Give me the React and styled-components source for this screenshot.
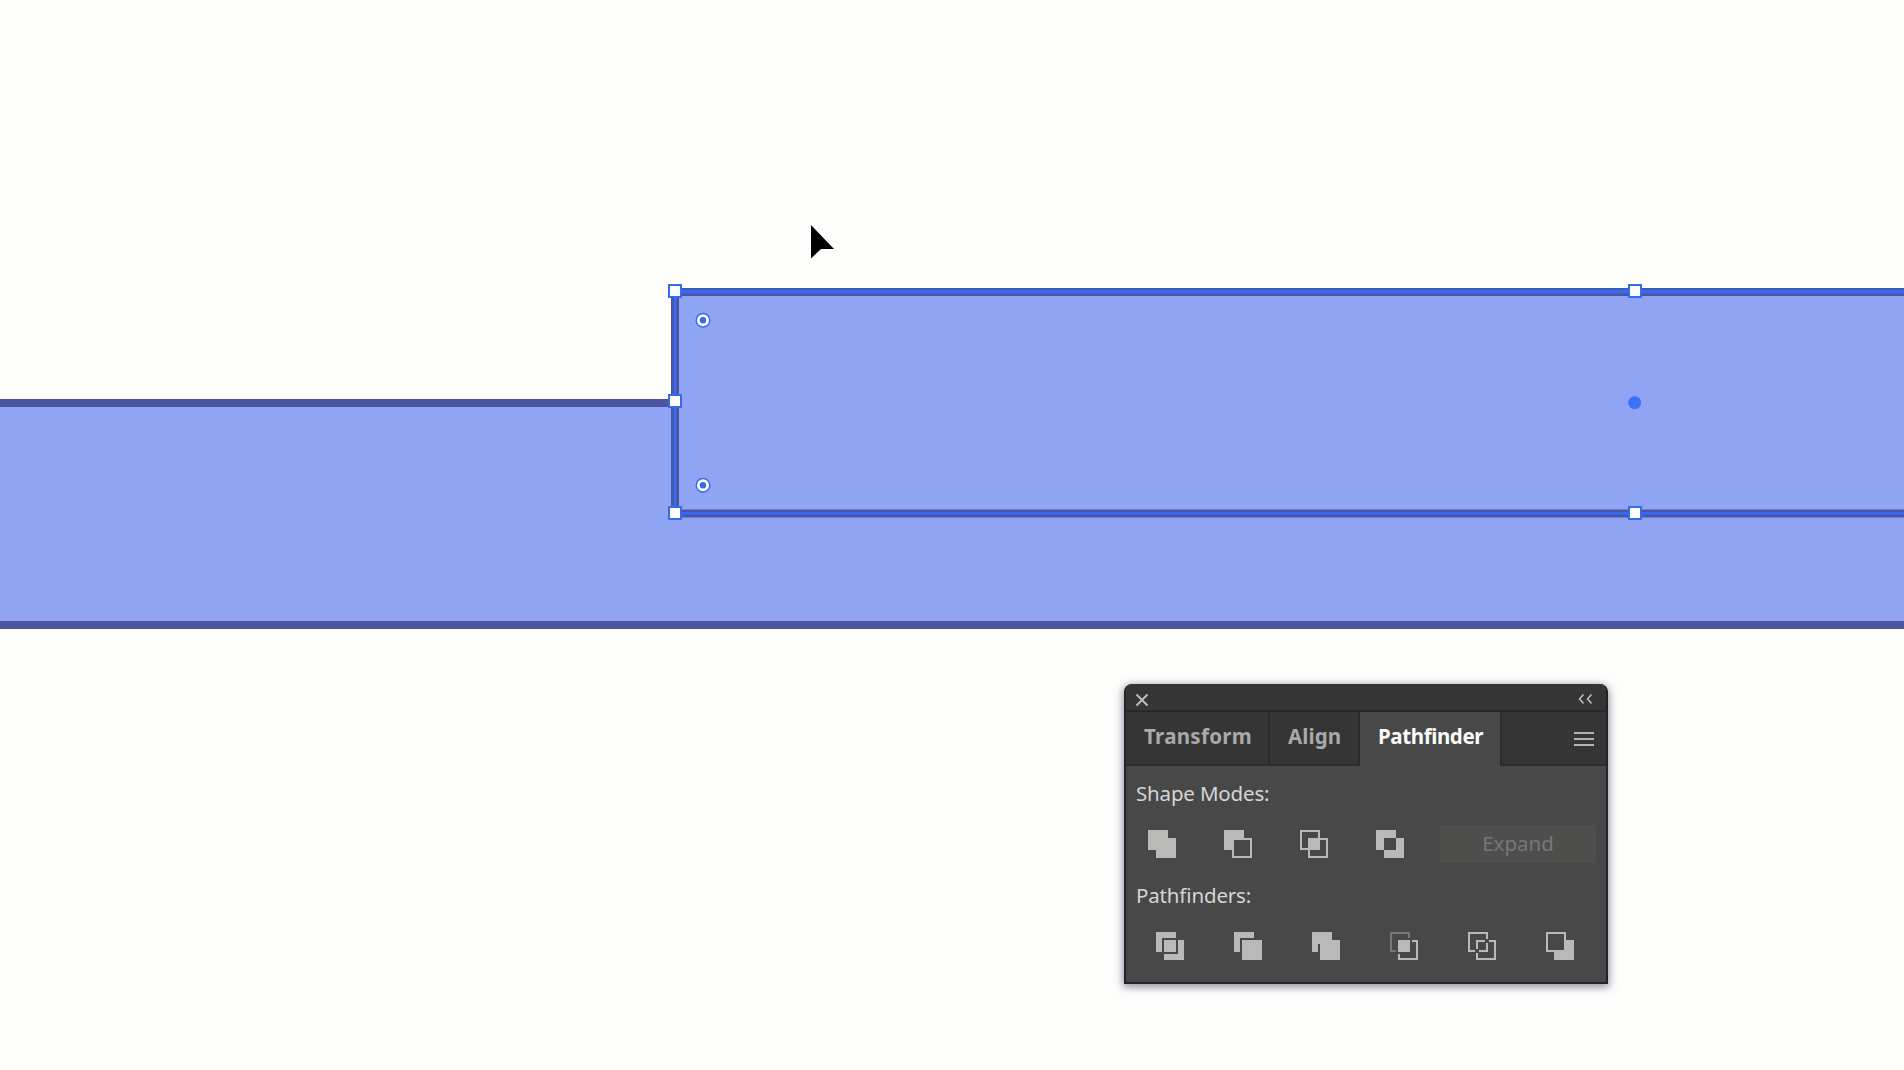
import React from "react";
import styled, { createGlobalStyle } from "styled-components";

const GlobalStyle = createGlobalStyle`
  html, body { margin: 0; padding: 0; background: #fdfefc; overflow: hidden; }
  * { box-sizing: border-box; }
`;

const Artboard = styled.main`
  position: relative;
  width: 1904px;
  height: 1070px;
  overflow: hidden;
  background: #fdfefc;
  font-family: "Noto Sans", "Open Sans", sans-serif;
`;

const Drawing = styled.svg`
  position: absolute;
  inset: 0;
  display: block;
`;

const Panel = styled.section`
  position: absolute;
  left: 1124px;
  top: 684px;
  width: 484px;
  height: 300px;
  display: flex;
  flex-direction: column;
  border: 2px solid #232329;
  border-top: 0;
  border-radius: 8px 8px 0 0;
  background: #484848;
  box-shadow: 0 2px 8px 1px rgba(30, 30, 60, 0.5);
  overflow: hidden;
`;

const TitleBar = styled.header`
  display: flex;
  align-items: center;
  justify-content: space-between;
  height: 28px;
  flex: none;
  padding: 5px 13px 0 9px;
  background: #353535;
  border-bottom: 2px solid #292929;
`;

const TabStrip = styled.nav`
  display: flex;
  height: 54px;
  flex: none;
  background: #353535;
`;

const Tab = styled.div`
  display: flex;
  align-items: center;
  width: ${(p) => p.$width}px;
  padding: 0 0 ${(p) => (p.$active ? 7 : 5)}px ${(p) => p.$inset}px;
  font-size: 20.5px;
  font-weight: 700;
  letter-spacing: ${(p) => p.$tracking}px;
  line-height: 28px;
  white-space: nowrap;
  color: ${(p) => (p.$active ? "#fafafa" : "#a9a9a9")};
  background: ${(p) => (p.$active ? "#484848" : "#353535")};
  border-right: 2px solid #2a2a2a;
  border-bottom: ${(p) => (p.$active ? "0" : "2px solid #2d2d2d")};
`;

const TabFill = styled.div`
  display: flex;
  flex: 1;
  align-items: center;
  justify-content: flex-end;
  padding: 2px 12px 0 0;
  border-bottom: 2px solid #2d2d2d;
`;

const Body = styled.div`
  display: flex;
  flex-direction: column;
`;

const Label = styled.div`
  height: 28px;
  margin-top: ${(p) => p.$top}px;
  padding-left: 10px;
  font-size: 20.5px;
  line-height: 28px;
  letter-spacing: ${(p) => p.$tracking}px;
  color: #d6d6d6;
`;

const IconRow = styled.div`
  display: flex;
  align-items: center;
  height: 38px;
  margin-top: ${(p) => p.$top}px;
  padding-left: ${(p) => p.$inset}px;
  gap: ${(p) => p.$gap}px;
`;

const Glyph = styled.svg`
  display: block;
  flex: none;
`;

const ExpandButton = styled.div`
  display: flex;
  align-items: center;
  justify-content: center;
  width: 156px;
  height: 38px;
  margin-left: -12px;
  padding-bottom: 2px;
  font-size: 20.5px;
  letter-spacing: 0;
  color: #777777;
  background: #4e4e4d;
`;

const INK = "#b9b9b7";

function ShapeIcon({ children }) {
  return (
    <Glyph width="28" height="28" viewBox="0 0 28 28" fill={INK} shapeRendering="crispEdges">
      {children}
    </Glyph>
  );
}

const Frame = ({ x, y }) => (
  <rect x={x + 1} y={y + 1} width="18" height="18" fill="none" stroke={INK} strokeWidth="2" />
);

const shapeModes = [
  <path d="M0 0h20v8h8v20H8v-8H0z" />,
  <>
    <path d="M0 0h20v8H8v12H0z" />
    <Frame x={8} y={8} />
  </>,
  <>
    <Frame x={0} y={0} />
    <Frame x={8} y={8} />
    <path d="M8 8h12v12H8z" />
  </>,
  <path fillRule="evenodd" d="M0 0h20v8h8v20H8v-8H0zM8 8v12h12V8z" />,
];

const pathfinders = [
  <path d="M0 0h20v6H6v14H0zM8 8h12v12H8zM22 8h6v20H8v-6h14z" />,
  <path d="M0 0h20v6H6v14H0zM8 8h20v20H8z" />,
  <path d="M0 0h20v8h8v20H8V12H6v8H0z" />,
  <>
    <path fill="#77777b" d="M0 0h20v6h-2V2H2v16h4v2H0z" />
    <path d="M8 8h12v12H8zM22 8h6v20H8v-6h2v4h16V10h-4z" />
  </>,
  <>
    <path d="M0 0h20v7h-2V2H2v16h5v2H0zM8 8h9v2h-7v7H8zM20 11v9h-9v-2h7v-7zM21 8h7v20H8v-7h2v5h16V10h-5z" />
  </>,
  <>
    <Frame x={0} y={0} />
    <path d="M20 8h8v20H8v-8h12z" />
  </>,
];

const STROKE = "#4b559f";
const SELECT = "#356bf2";

const Handle = ({ x, y }) => (
  <rect x={x + 1} y={y + 1} width="12" height="12" fill="#ffffff" stroke={SELECT} strokeWidth="2" />
);

const CornerWidget = ({ y }) => (
  <g>
    <circle cx="703" cy={y} r="7.5" fill={SELECT} />
    <circle cx="703" cy={y} r="6" fill="#ffffff" />
    <circle cx="703" cy={y} r="3.2" fill={SELECT} />
  </g>
);

export default function App() {
  return (
    <>
      <GlobalStyle />
      <Artboard>
        <Drawing width="1904" height="1070" viewBox="0 0 1904 1070">
          <rect x="-20" y="403" width="1960" height="222" fill="#8fa5f4" stroke={STROKE} strokeWidth="8" />
          <rect x="675" y="292" width="1260" height="221.5" fill="#8fa5f4" stroke={STROKE} strokeWidth="8" />
          <path d="M675 291.5H1904" stroke={SELECT} strokeWidth="4" />
          <path d="M675 291V513.3H1904" fill="none" stroke={SELECT} strokeWidth="2.8" />
          <Handle x={668} y={284} />
          <Handle x={668} y={394} />
          <Handle x={668} y={506} />
          <Handle x={1628} y={284} />
          <Handle x={1628} y={506} />
          <circle cx="1634.7" cy="402.7" r="6.5" fill="#3c72fb" />
          <CornerWidget y={320.3} />
          <CornerWidget y={485.2} />
          <path d="M811 225L834 249H821L811 258.5z" fill="#000000" />
        </Drawing>

        <Panel>
          <TitleBar>
            <Glyph width="14" height="14" viewBox="0 0 14 14" fill="none" stroke="#bdbdbd" strokeWidth="2">
              <path d="M1.5 1.5l11 11M12.5 1.5l-11 11" />
            </Glyph>
            <Glyph width="16" height="14" viewBox="0 0 16 14" fill="none" stroke="#bdbdbd" strokeWidth="1.6">
              <path d="M6.5 1.5L2.5 6l4 4.5M14.5 1.5L10.5 6l4 4.5" />
            </Glyph>
          </TitleBar>
          <TabStrip>
            <Tab $width={144} $inset={18} $tracking={0.3}>Transform</Tab>
            <Tab $width={90} $inset={18} $tracking={0.1}>Align</Tab>
            <Tab $width={142} $inset={18} $tracking={-0.4} $active>Pathfinder</Tab>
            <TabFill>
              <Glyph width="20" height="14" viewBox="0 0 20 14" fill="#b5b5b5" shapeRendering="crispEdges">
                <path d="M0 0h20v2H0zM0 6h20v2H0zM0 12h20v2H0z" />
              </Glyph>
            </TabFill>
          </TabStrip>
          <Body>
            <Label $top={13} $tracking={-0.17}>Shape Modes:</Label>
            <IconRow $top={18} $inset={22} $gap={48}>
              {shapeModes.map((icon, i) => (
                <ShapeIcon key={i}>{icon}</ShapeIcon>
              ))}
              <ExpandButton>Expand</ExpandButton>
            </IconRow>
            <Label $top={18} $tracking={-0.15}>Pathfinders:</Label>
            <IconRow $top={18} $inset={30} $gap={50}>
              {pathfinders.map((icon, i) => (
                <ShapeIcon key={i}>{icon}</ShapeIcon>
              ))}
            </IconRow>
          </Body>
        </Panel>
      </Artboard>
    </>
  );
}
